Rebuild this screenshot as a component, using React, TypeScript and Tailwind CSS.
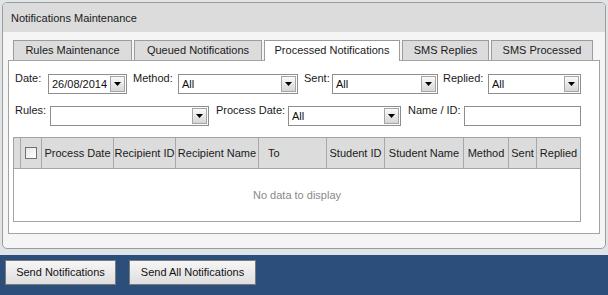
import React from 'react';

const tabs = [
  { label: 'Rules Maintenance', w: 'w-[119px]' },
  { label: 'Queued Notifications', w: 'w-[128px]' },
  { label: 'Processed Notifications', w: 'w-[136px]', active: true },
  { label: 'SMS Replies', w: 'w-[87px]' },
  { label: 'SMS Processed', w: 'w-[102px]' },
];

const columns = [
  { label: '', w: 'w-[7px]' },
  { label: 'check', w: 'w-[21px]' },
  { label: 'Process Date', w: 'w-[72px]' },
  { label: 'Recipient ID', w: 'w-[62px]' },
  { label: 'Recipient Name', w: 'w-[83px]' },
  { label: 'To', w: 'w-[68px]', left: true },
  { label: 'Student ID', w: 'w-[58px]' },
  { label: 'Student Name', w: 'w-[79px]' },
  { label: 'Method', w: 'w-[45px]' },
  { label: 'Sent', w: 'w-[28px]' },
  { label: 'Replied', w: 'w-[43px]', last: true },
];

// combo box with the little grey arrow button on the right
function Combo({ className, value = '' }: { className: string; value?: string }) {
  return (
    <div className={`flex h-[20px] shrink-0 items-center border border-[#8e8e8e] bg-white ${className}`}>
      <span className="flex-1 truncate pl-[3px] pt-[1px] leading-[13px]">{value}</span>
      <div className="mr-px flex h-[16px] w-[15px] items-center justify-center border border-[#a5a5a5] bg-linear-to-b from-[#fafafa] to-[#d6d6d6]">
        <svg width="7" height="4" viewBox="0 0 7 4">
          <path d="M0 0h7L3.5 4z" fill="#000" />
        </svg>
      </div>
    </div>
  );
}

function Label({ className, text }: { className: string; text: string }) {
  return <div className={`-mt-[2px] shrink-0 leading-[13px] text-[#1a1a1a] ${className}`}>{text}</div>;
}

export default function App() {
  return (
    <div className="flex h-[295px] w-[608px] flex-col bg-[#dfe5e6] font-['Liberation_Sans',Arial,sans-serif] text-[11px] text-[#111]">
      {/* Main panel */}
      <div className="ml-[2px] mt-[2px] w-[604px] overflow-hidden rounded-[5px] border border-[#9c9c9c] bg-[#f5f5f5] pb-[14px]">
        <div className="flex h-[29px] items-center bg-[#dcdcdc] pl-[8px] pt-px text-[#1a1a1a]">Notifications Maintenance</div>

        <div className="px-[5px] pt-[8px]">
          {/* Tabs */}
          <div className="flex items-start gap-[2px] pl-[5px]">
            {tabs.map(tab => (
              <div
                key={tab.label}
                className={`flex shrink-0 items-center justify-center border border-b-0 border-[#9c9c9c] pb-px text-[#1a1a1a] ${tab.w} ${
                  tab.active ? 'relative z-10 h-[21px] bg-white' : 'h-[20px] bg-[#dcdcdc]'
                }`}
              >
                {tab.label}
              </div>
            ))}
          </div>

          {/* Tab content */}
          <div className="-mt-px border border-[#a3a3a3] bg-white pb-[11px] pt-[13px]">
            <div className="flex items-start pl-[6px]">
              <Label className="w-[33px]" text="Date:" />
              <Combo className="w-[79px]" value="26/08/2014" />
              <Label className="w-[51px] pl-[6px]" text="Method:" />
              <Combo className="w-[120px]" value="All" />
              <Label className="w-[34px] pl-[6px]" text="Sent:" />
              <Combo className="w-[106px]" value="All" />
              <Label className="w-[50px] pl-[5px]" text="Replied:" />
              <Combo className="w-[93px]" value="All" />
            </div>

            <div className="mt-[12px] flex items-start pl-[6px]">
              <Label className="w-[35px]" text="Rules:" />
              <Combo className="w-[159px]" />
              <Label className="w-[79px] pl-[7px]" text="Process Date:" />
              <Combo className="w-[113px]" value="All" />
              <Label className="w-[63px] pl-[7px]" text="Name / ID:" />
              <div className="h-[20px] w-[117px] shrink-0 border border-[#8e8e8e] bg-white" />
            </div>

            {/* Grid */}
            <div className="ml-[4px] mt-[11px] w-[568px] border border-[#a3a3a3]">
              <div className="flex h-[31px] border-b border-[#a3a3a3] bg-[#dcdcdc]">
                {columns.map((col, i) => (
                  <div
                    key={i}
                    className={`flex shrink-0 items-center ${col.left ? 'justify-start pl-[9px]' : 'justify-center'} ${
                      col.last ? '' : 'border-r border-[#a8a8a8]'
                    } ${col.w} whitespace-nowrap text-[#1a1a1a]`}
                  >
                    {col.label === 'check' ? (
                      <span className="block h-[12px] w-[12px] border border-[#707070] bg-linear-to-br from-[#e6e6e6] to-white" />
                    ) : (
                      col.label
                    )}
                  </div>
                ))}
              </div>
              <div className="flex h-[52px] items-center justify-center text-[#8a8a8a]">No data to display</div>
            </div>
          </div>
        </div>
      </div>

      {/* Footer bar */}
      <div className="mt-[6px] flex flex-1 items-start gap-[13px] bg-[#2c4e7b] pl-[5px] pt-[5px]">
        <button className="h-[25px] w-[111px] border border-[#7a7a7a] bg-linear-to-b from-[#f6f6f6] to-[#dedede] text-[#111]">
          Send Notifications
        </button>
        <button className="h-[25px] w-[127px] border border-[#7a7a7a] bg-linear-to-b from-[#f6f6f6] to-[#dedede] text-[#111]">
          Send All Notifications
        </button>
      </div>
    </div>
  );
}
